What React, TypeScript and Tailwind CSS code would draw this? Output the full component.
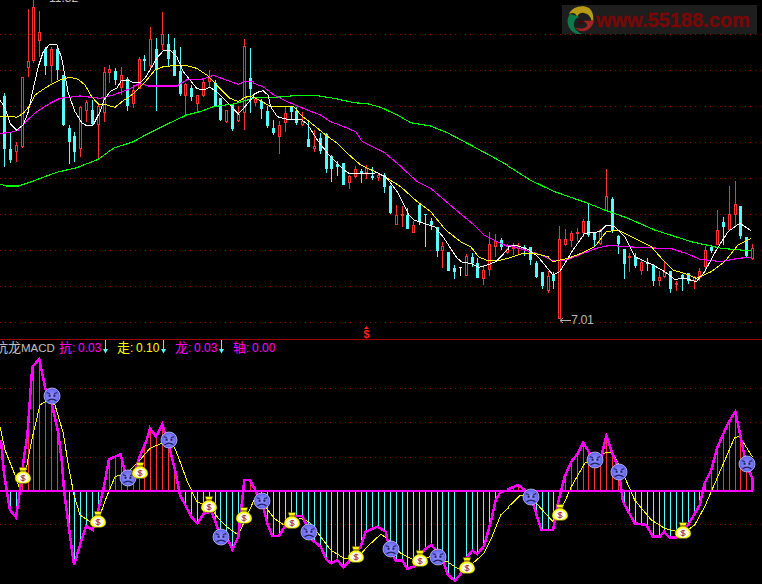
const RED = "#ff3232";
const CYAN = "#54fcfc";

type P = [number, number];
const pts = (ox: number, oy: number, a: number[][]): P[] => a.map(([x, y]) => [ox + x / 3, oy + y / 3]);
const str = (p: P[]) => p.map(([x, y]) => `${x.toFixed(1)},${y.toFixed(1)}`).join(" ");

// x, wickTop, wickBottom, bodyTop, bodyBottom, 1 = red 0 = cyan (zoom units)
const c1 = [
  [13,280,500,288,446,0],[31,400,490,448,480,0],[49,425,485,436,456,1],[67,232,445,232,441,1],[85,28,232,184,204,1],[100,0,190,22,184,1],[118,33,170,97,122,1],[136,140,225,148,198,0],[154,140,250,148,197,1],[172,140,240,148,210,0],[190,225,378,225,375,0],[208,375,492,384,426,0],[223,395,485,408,456,0],[241,318,470,320,446,1],[259,300,365,306,332,1],[277,300,378,330,372,0],[295,315,478,318,376,1],[313,200,365,217,338,1],[328,195,250,208,218,1],[346,205,255,212,240,0],[364,200,285,226,263,1],[382,230,332,238,318,0],[400,255,325,270,311,1],[418,170,268,178,268,1],[433,165,212,177,182,0],[451,80,205,118,198,1],[469,115,332,148,208,0],[487,37,150,103,136,1],[505,102,198,132,178,0],[523,115,228,150,228,0],[541,142,288,212,282,0],[556,250,345,252,287,1],[574,255,302,264,290,0],[592,285,338,286,311,1],[610,238,290,246,288,1],[628,210,262,234,245,1],[646,240,320,248,318,0],[661,294,362,294,360,0],[679,330,370,330,366,1],[697,312,392,312,388,0],[715,318,366,342,364,1],[733,118,390,138,338,1],[751,145,338,234,266,0],
];
const c2 = [
  [3,290,318,296,310,1],[22,296,357,304,328,0],[40,318,384,334,378,0],[58,360,404,384,400,0],[76,364,462,376,412,1],[94,322,396,340,370,1],[112,320,360,322,336,0],[127,322,374,334,368,0],[145,335,378,362,376,1],[163,365,440,418,440,0],[181,390,456,438,446,1],[199,400,462,414,454,0],[217,400,518,402,506,0],[232,466,545,468,508,0],[250,482,528,492,500,0],[268,490,555,490,554,0],[286,526,568,528,548,1],[304,498,534,508,532,1],[322,506,548,512,522,0],[337,495,536,505,518,1],[355,500,540,528,534,0],[373,520,542,526,534,1],[391,520,578,526,560,0],
];
const c4 = [
  [409,105,192,108,190,0],[427,165,225,195,225,1],[445,168,232,192,198,1],[460,175,237,195,237,0],[478,213,248,225,248,1],[496,160,225,165,215,0],[514,192,290,192,192,0],[532,205,240,214,226,0],[550,232,320,232,303,0],[565,275,353,289,302,1],[583,306,362,306,362,0],[601,344,386,355,367,0],[637,312,378,319,377,1],[655,308,350,322,340,0],[670,325,384,339,384,0],[688,345,404,360,386,1],[706,247,378,283,361,1],[724,252,320,272,290,1],[742,265,300,270,290,0],
];
const c5 = [
  [-2,295,312,296,310,1],[15,280,315,290,298,1],[30,278,312,288,298,1],[48,285,318,290,300,0],[66,292,346,292,330,0],[84,332,384,338,380,0],[102,366,416,366,408,0],[120,362,428,378,424,1],[136,366,418,372,392,0],[154,228,506,268,506,1],[172,238,288,268,284,1],[190,244,292,250,272,1],[208,235,272,246,250,1],[226,208,260,213,248,1],[241,160,262,213,256,0],[259,248,292,248,270,0],[277,236,285,240,282,1],[295,57,182,138,182,1],[313,142,248,146,244,0],[331,254,312,258,282,0],[349,296,386,296,342,0],[364,310,366,318,322,1],[382,310,354,322,348,0],[400,328,374,336,362,1],[418,325,362,338,340,0],[436,342,408,344,394,0],[454,364,408,380,394,1],[469,336,384,366,380,1],[487,362,428,362,416,0],[505,392,424,400,406,1],[523,372,424,376,384,0],[541,368,402,370,392,0],[559,378,416,380,394,1],[574,354,392,362,384,1],[592,288,366,300,352,1],[610,286,310,290,302,0],[628,180,286,240,284,1],[646,200,286,216,232,0],[664,108,242,192,240,1],[682,93,228,162,194,1],[697,168,268,168,258,0],[715,262,322,262,318,0],[733,282,330,294,328,1],
];
const conv = (ox: number, oy: number, a: number[][]) =>
  a.map(([x, wt, wb, bt, bb, red]) => ({
    x: Math.round(ox + x / 3),
    wt: Math.round(oy + wt / 3),
    wb: Math.round(oy + wb / 3),
    bt: Math.round(oy + bt / 3),
    bb: Math.round(oy + bb / 3),
    red: !!red,
  }));
const candles = [...conv(0, 0, c1), ...conv(254, 0, c2), ...conv(254, 150, c4), ...conv(508, 150, c5)];

const white: P[] = [
  ...pts(0,0,[[0,300],[15,325],[30,370],[50,390],[70,375],[85,335],[100,265],[115,200],[130,155],[150,132],[170,132],[185,175],[205,280],[225,335],[245,368],[262,378],[280,375],[300,335],[312,300],[330,275],[350,265],[365,240],[385,240],[400,248],[420,248],[435,235],[450,210],[470,175],[490,152],[510,150],[530,170],[550,215],[570,240],[590,265],[610,270],[630,262],[650,275],[670,295],[690,315],[715,342],[735,320],[760,290]]),
  ...pts(254,0,[[0,283],[15,275],[27,272],[42,285],[50,320],[70,350],[100,358],[140,358],[160,372],[190,420],[225,465]]),
  ...pts(254,150,[[270,60],[285,70],[340,72],[370,68],[395,80],[430,125],[465,195],[480,210],[545,232],[570,265],[610,325],[625,337],[650,340],[675,352],[700,345],[725,335],[750,310],[762,298]]),
  ...pts(508,150,[[0,290],[20,285],[60,298],[90,320],[135,375],[155,365],[195,300],[230,250],[275,245],[295,225],[320,230],[350,260],[380,320],[435,345],[470,365],[500,388],[530,385],[565,395],[590,365],[625,300],[660,245],[695,220],[730,242]]),
];
const yellow: P[] = [
  ...pts(0,0,[[0,350],[40,350],[50,352],[70,340],[90,315],[105,285],[130,268],[150,255],[180,240],[210,232],[235,238],[255,255],[275,290],[295,312],[320,315],[345,322],[370,302],[395,285],[420,262],[440,240],[465,210],[490,200],[520,197],[560,197],[590,205],[620,225],[645,250],[670,275],[690,295],[715,305],[735,292],[760,287]]),
  ...pts(254,0,[[0,293],[25,305],[50,320],[120,320],[140,345],[170,368],[215,405],[250,430]]),
  ...pts(254,150,[[280,10],[320,45],[370,68],[400,85],[440,110],[490,155],[530,185],[575,240],[620,275],[650,290],[675,322],[705,333],[740,330],[762,325]]),
  ...pts(508,150,[[0,325],[45,310],[80,310],[120,320],[135,335],[180,325],[220,310],[260,290],[295,245],[330,240],[380,265],[430,290],[465,330],[495,360],[535,372],[565,385],[610,365],[650,335],[690,285],[730,265]]),
];
const magenta: P[] = [
  ...pts(0,0,[[0,400],[30,398],[55,390],[80,362],[110,335],[150,310],[180,295],[240,288],[300,295],[340,285],[385,268],[420,250],[445,258],[530,258],[560,240],[610,237],[640,226],[670,237],[715,253],[735,245],[760,245]]),
  ...pts(254,0,[[0,250],[30,262],[60,285],[100,305],[160,330],[200,345],[230,365],[270,380],[305,395],[325,425],[390,457]]),
  ...pts(254,150,[[430,40],[490,95],[530,115],[600,175],[660,225],[690,255],[740,280],[762,290]]),
  ...pts(508,150,[[0,285],[50,300],[100,315],[135,333],[170,332],[220,312],[265,295],[305,286],[350,290],[490,296],[540,312],[575,328],[640,335],[690,325],[730,322]]),
];
const green: P[] = [
  ...pts(0,0,[[0,553],[20,558],[55,558],[100,543],[170,517],[230,503],[295,478],[340,445],[400,425],[440,403],[490,378],[560,345],[600,335],[640,320],[700,312],[760,295]]),
  ...pts(254,0,[[0,293],[80,291],[120,287],[190,287],[240,295],[300,308],[340,311],[380,322],[430,345],[470,368],[530,378],[580,398],[640,430],[700,462],[760,495]]),
  ...pts(508,150,[[0,48],[70,92],[140,125],[240,160],[290,180],[360,205],[440,240],[550,275],[640,295],[730,303]]),
];

const macd: P[] = [
  ...pts(0,440,[[3,0],[12,100],[20,151],[30,210],[48,232],[56,180],[62,130],[72,50],[80,0]]),
  ...pts(0,330,[[82,320],[97,110],[118,88],[136,175],[155,220],[175,310]]),
  ...pts(0,440,[[185,60],[192,150],[205,250],[222,375],[240,315],[258,258],[278,270],[295,210],[310,150],[327,58],[362,43],[378,110],[398,130],[415,60],[440,0]]),
  ...pts(0,330,[[450,295],[468,320],[487,283],[510,360]]),
  ...pts(0,440,[[525,90],[540,165],[575,232],[592,250],[612,220],[635,215],[655,270],[680,290],[697,328],[715,290],[730,150],[733,120],[750,120],[762,145]]),
  ...pts(254,440,[[0,140],[5,155],[25,190],[40,250],[55,288],[75,288],[95,255],[125,228],[145,228],[155,250],[175,300],[200,320],[218,360],[232,370],[250,360],[268,382],[290,360],[320,320],[335,275],[370,260],[395,275],[405,320],[425,362],[445,362],[460,386],[480,380],[510,330],[532,315],[560,345],[582,405],[602,422],[620,402],[640,350],[655,332],[670,342],[690,318],[712,240],[725,180],[740,155],[762,152]]),
  ...pts(508,400,[[0,268],[30,255],[50,270],[75,310],[100,390],[135,390],[150,310],[170,230],[190,185],[210,160],[226,128],[245,160],[260,175],[280,170],[295,107],[315,165],[330,200],[345,305],[380,370],[415,375],[435,410],[455,410],[468,395],[485,413],[505,413],[520,395],[540,375],[575,315],[590,250],[610,210],[627,145],[660,70],[682,35],[700,120],[715,195],[733,235],[733,270]]),
];
const signal: P[] = [
  ...pts(0,330,[[0,290]]),
  ...pts(0,440,[[15,30],[45,105],[60,150],[78,90],[95,0]]),
  ...pts(0,330,[[100,310],[120,225],[140,212],[165,225],[190,310]]),
  ...pts(0,440,[[205,75],[222,165],[240,225],[270,245],[300,225],[320,170],[345,110],[380,100],[420,60],[450,25]]),
  ...pts(0,330,[[485,340],[520,345],[535,380]]),
  ...pts(0,440,[[560,120],[590,185],[630,200],[655,235],[680,260],[715,285],[735,240],[762,180]]),
  ...pts(254,440,[[30,195],[60,235],[90,255],[140,235],[165,245],[200,290],[230,330],[270,355],[305,360],[340,320],[380,283],[400,295],[440,340],[480,360],[530,350],[580,365],[610,385],[640,385],[690,340],[710,300],[740,225],[762,205]]),
  ...pts(508,400,[[0,322],[35,287],[50,285],[85,310],[135,365],[155,340],[190,260],[230,190],[295,157],[315,160],[345,220],[380,300],[430,360],[470,385],[525,400],[560,375],[590,320],[625,240],[680,112],[695,110],[733,170]]),
];

const interp = (line: P[], x: number) => {
  for (let i = 1; i < line.length; i++) {
    const [x0, y0] = line[i - 1];
    const [x1, y1] = line[i];
    if (x >= x0 && x <= x1 && x1 > x0) return y0 + ((y1 - y0) * (x - x0)) / (x1 - x0);
  }
  return 490;
};
const ZERO = 490;
const bars = candles
  .map((c) => ({ x: c.x, y: Math.round(interp(macd, c.x)) }))
  .filter((b) => b.x > 5 && b.x < 752);

const faces: P[] = [[52,396],[169,440],[128,478],[221,537],[262,501],[309,532],[391,549],[438,557],[531,497],[595,460],[619,472],[747,464]];
const bags: P[] = [[23,476],[98,520],[140,471],[209,505],[244,516],[292,521],[356,555],[420,559],[467,566],[560,513],[683,531]];

const Face = ({ x, y }: { x: number; y: number }) => (
  <g transform={`translate(${x} ${y})`}>
    <circle r="8" fill="url(#faceFill)" stroke="#d8d8ff" strokeWidth="0.7" />
    <path d="M-5.2 -3.4 L-2 -2.2 M5.2 -3.4 L2 -2.2" stroke="#2c2c78" strokeWidth="1.2" fill="none" />
    <rect x="-3.4" y="-1.4" width="2" height="2.2" fill="#202058" />
    <rect x="1.4" y="-1.4" width="2" height="2.2" fill="#202058" />
    <path d="M-4.4 4.8 Q0 1.4 4.4 4.8" stroke="#202058" strokeWidth="1.4" fill="none" />
  </g>
);

const Bag = ({ x, y }: { x: number; y: number }) => (
  <g transform={`translate(${x} ${y})`}>
    <path d="M-4 -8.6 L4 -8.6 L2.4 -4.6 C6 -3.4 8 -0.4 8 2.4 C8 6 4.6 7.6 0 7.6 C-4.6 7.6 -8 6 -8 2.4 C-8 -0.4 -6 -3.4 -2.4 -4.6 Z" fill="#ffff00" stroke="#403800" strokeWidth="0.5" />
    <ellipse cx="0" cy="2" rx="5.9" ry="4.7" fill="#fffff0" />
    <rect x="-2.6" y="-5.8" width="5.2" height="1.4" fill="#8c7410" />
    <path d="M2.2 0 C1 -0.8 -2.2 -0.6 -2 0.9 C-1.8 2.4 2.2 1.6 2.2 3.2 C2.2 4.8 -1.2 5 -2.4 3.8 M0 -1.2 L0 5.6" stroke="#a02828" strokeWidth="1" fill="none" />
  </g>
);

const Down = () => (
  <svg width="7" height="14" viewBox="0 0 7 14" className="shrink-0 self-start">
    <path d="M3.5 0 V10" stroke={CYAN} strokeWidth="1" shapeRendering="crispEdges" />
    <path d="M1 9 H6 L3.5 13.5 Z" fill={CYAN} />
  </svg>
);

const Logo = () => (
  <svg width="29" height="29" viewBox="0 0 29 29" className="shrink-0">
    <path d="M3 9 C6 2 16 -1 23 3 C28 7 28 15 26 19 C26 13 23 9 18 8 C15 7 12 9 11 12 C10 8 7 7 3 9 Z" fill="#b89a18" />
    <path d="M28 14 C28 22 21 27 15 26 C12 25.500 10 24 9 22 C13 24.500 19 24 21 21 C22 19 19 16 16 16 C20 15 25 17 28 14 Z" fill="#a02424" />
    <path d="M4 9 C0 14 1 23 7 27 C10 29 13 29.500 16 29 C11 27 7 23 8 18 C8.500 15 10 13 13 12 C10 10 7 10 4 9 Z" fill="#0e7a4a" />
    <circle cx="15" cy="16.500" r="2.6" fill="#3a0c0c" />
  </svg>
);

function Item({ name, value, color, arrow }: { name: string; value: string; color: string; arrow?: boolean }) {
  return (
    <div className="flex w-[58px] shrink-0 items-baseline" style={{ color }}>
      <span className="w-[13px] shrink-0 text-[13px] leading-none [font-family:'Noto_Sans_CJK_SC',sans-serif]">{name}</span>
      <span className="w-[6px] shrink-0 text-[12px] leading-none">:</span>
      <span className="w-[24px] shrink-0 text-[12px] leading-none">{value}</span>
      {arrow && <Down />}
    </div>
  );
}

export default function App() {
  const upperGrid = [34, 70, 106, 142, 178, 214, 250, 286, 322];
  const lowerGrid = [388, 422, 457, 524];
  return (
    <div className="flex h-[584px] w-[762px] flex-col overflow-hidden bg-black [font-family:'Liberation_Sans',sans-serif]">
      <section className="relative h-[340px] shrink-0 border-b border-[#a00000]">
        <svg width="762" height="339" viewBox="0 0 762 339" className="block">
          {upperGrid.map((y) => (
            <line key={y} x1="0" x2="762" y1={y + 0.5} y2={y + 0.5} stroke="#8c0000" strokeDasharray="1 4" />
          ))}
          <g shapeRendering="crispEdges">
            {candles.map((c, i) => (
              <g key={i}>
                <rect x={c.x} y={c.wt} width="1" height={Math.max(1, c.wb - c.wt)} fill={c.red ? RED : CYAN} />
                {c.red ? (
                  <>
                    <rect x={c.x - 1} y={c.bt} width="3" height={Math.max(2, c.bb - c.bt)} fill={RED} />
                    {c.bb - c.bt > 2 && <rect x={c.x} y={c.bt + 1} width="1" height={c.bb - c.bt - 2} fill="#000" />}
                  </>
                ) : (
                  <rect x={c.x - 1} y={c.bt} width="3" height={Math.max(1, c.bb - c.bt)} fill={CYAN} />
                )}
              </g>
            ))}
            <rect x="460" y="267" width="1" height="9" fill="#fff" />
            <rect x="459" y="267" width="3" height="1" fill="#fff" />
            <polyline points={str(green)} fill="none" stroke="#00ff00" strokeWidth="1.1" />
            <polyline points={str(magenta)} fill="none" stroke="#ff00ff" strokeWidth="1.1" />
            <polyline points={str(yellow)} fill="none" stroke="#ffff00" />
            <polyline points={str(white)} fill="none" stroke="#ffffff" />
          </g>
        </svg>

        <span className="absolute left-[49px] top-[-8px] text-[12px] leading-[13px] text-[#c0c0c0]">11.32</span>

        <div className="absolute left-[562px] top-[5px] flex h-[29px] w-[195px] items-center overflow-hidden bg-[#1e1e1e] pl-[4px]">
          <Logo />
          <span className="ml-[1px] text-[20px] font-bold leading-none text-[#760808] [-webkit-text-stroke:0.4px_#760808]">www.55188.com</span>
        </div>

        <div className="absolute left-[559px] top-[313px] flex items-center text-[#b4b4b4]">
          <svg width="12" height="7" viewBox="0 0 12 7" className="shrink-0">
            <path d="M1 3.5 H12 M4 1 L1 3.5 L4 6" stroke="#b4b4b4" strokeWidth="1" fill="none" />
          </svg>
          <span className="text-[12.5px] leading-[14px] tracking-[-0.5px]">7.01</span>
        </div>

        <div className="absolute left-[362px] top-[326px] flex w-[9px] flex-col items-center text-[#ff2020]">
          <svg width="5" height="3" viewBox="0 0 5 3" className="block">
            <path d="M2.5 0 L5 3 H0 Z" fill="#ff2020" />
          </svg>
          <span className="text-[11px] font-bold leading-[10px]">$</span>
        </div>
      </section>

      <header className="flex h-[15px] shrink-0 items-baseline">
        <div className="ml-[-5px] flex w-[64px] shrink-0 items-baseline text-[#c0c0c0]">
          <span className="text-[13px] leading-none [font-family:'Noto_Sans_CJK_SC',sans-serif]">抗龙</span>
          <span className="text-[11.5px] leading-none">MACD</span>
        </div>
        <Item name="抗" value="0.03" color="#ff00ff" arrow />
        <Item name="走" value="0.10" color="#ffff00" arrow />
        <Item name="龙" value="0.03" color="#ff00ff" arrow />
        <Item name="轴" value="0.00" color="#ff00ff" />
      </header>

      <section className="min-h-0 flex-1">
        <svg width="762" height="229" viewBox="0 355 762 229" className="block">
          <defs>
            <radialGradient id="faceFill" cx="50%" cy="50%" r="55%">
              <stop offset="0%" stopColor="#9090ff" />
              <stop offset="70%" stopColor="#7070f4" />
              <stop offset="100%" stopColor="#4444d8" />
            </radialGradient>
          </defs>
          {lowerGrid.map((y) => (
            <line key={y} x1="0" x2="762" y1={y + 0.5} y2={y + 0.5} stroke="#8c0000" strokeDasharray="1 4" />
          ))}
          <g shapeRendering="crispEdges">
            {bars.map((b, i) => (
              <line key={i} x1={b.x + 0.5} x2={b.x + 0.5} y1={b.y} y2={ZERO} stroke={b.y < ZERO ? RED : CYAN} />
            ))}
            <polyline points={str(signal)} fill="none" stroke="#ffff00" />
            <line x1="0" x2="753" y1="490.5" y2="490.5" stroke="#ff00ff" strokeWidth="2" />
            <polyline points={str(macd)} fill="none" stroke="#ff00ff" strokeWidth="2.5" />
          </g>
          {faces.map(([x, y], i) => (
            <Face key={i} x={x} y={y} />
          ))}
          {bags.map(([x, y], i) => (
            <Bag key={i} x={x} y={y} />
          ))}
        </svg>
      </section>
    </div>
  );
}
